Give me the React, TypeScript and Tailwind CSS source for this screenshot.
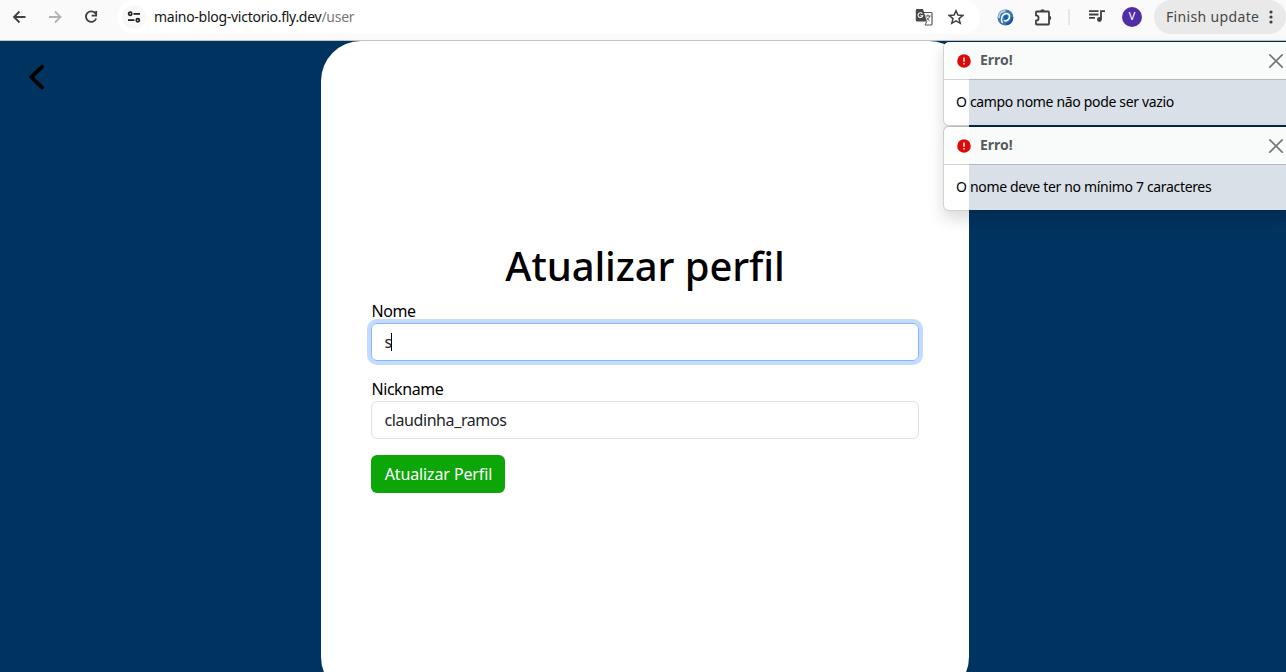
import React from "react";

const font = "font-['Noto_Sans',sans-serif]";

function Toolbar() {
  return (
    <header className="flex h-[41px] shrink-0 items-start border-b border-[#c4c4c4] bg-[#fafafa] text-[#404040]">
      <nav className="flex h-[34px] shrink-0 items-center pl-[11px]">
        <svg className="h-4 w-4" viewBox="0 0 16 16" fill="none" stroke="currentColor" strokeWidth="1.8"><path d="M14.5 8H3.5M8.5 2.5 3 8l5.5 5.5" /></svg>
        <svg className="ml-5 h-4 w-4 text-[#b3b3b3]" viewBox="0 0 16 16" fill="none" stroke="currentColor" strokeWidth="1.8"><path d="M2 8h11M8 2.5 13.5 8 8 13.5" /></svg>
        <svg className="ml-5 h-4 w-4" viewBox="0 0 16 16" fill="none" stroke="currentColor" strokeWidth="1.8"><path d="M12.7 4.7A5.3 5.3 0 1 0 13.2 9.5M13.2 2v4.6H8.6" /></svg>
      </nav>
      <div className="ml-[18px] flex h-[34px] w-[863px] shrink-0 items-center rounded-full bg-white pl-[5px]">
        <span className="flex h-6 w-6 items-center justify-center rounded-full bg-[#f8f8f8] text-[#202020]">
          <svg className="h-3.5 w-3.5" viewBox="0 0 14 14" fill="none" stroke="currentColor" strokeWidth="1.7"><circle cx="3.2" cy="3.8" r="1.6" /><path d="M6.5 3.8H13M1 10.2h6.4" /><circle cx="10.8" cy="10.2" r="1.6" /></svg>
        </span>
        <span className="ml-2 w-[761px] pb-[2px] text-[14px] tracking-[-0.27px] text-[#151515]">maino-blog-victorio.fly.dev<span className="text-[#777]">/user</span></span>
        <svg className="h-[18px] w-[18px] shrink-0" viewBox="0 0 18 18">
          <path d="M8.2 4.5H16a1 1 0 0 1 1 1V16a1 1 0 0 1-1 1h-6" fill="#fff" stroke="#555" strokeWidth="1.2" />
          <path d="M2 1h6l3.8 12.5H2A1.2 1.2 0 0 1 .8 12.3V2.2A1.2 1.2 0 0 1 2 1z" fill="#484848" />
          <path d="M7.3 5.6a2.4 2.4 0 1 0 .4 2.2H5.4" fill="none" stroke="#fff" strokeWidth="1.1" />
          <path d="M10.4 8h5.2M13 6.7V8M14.7 8c-.5 2-1.8 3.5-3.2 4.5M11.6 9.5c.7 1.4 1.8 2.5 3 3.3M10 17l1.8-3.5" fill="none" stroke="#555" strokeWidth="1" />
        </svg>
        <svg className="ml-[15px] h-4 w-4 shrink-0" viewBox="0 0 16 16" fill="none" stroke="currentColor" strokeWidth="1.5"><path d="m8 1.7 1.9 4.4 4.8.4-3.7 3.1 1.2 4.7L8 11.8l-4.2 2.5L5 9.6 1.3 6.5l4.8-.4z" /></svg>
      </div>
      <div className="ml-[17px] flex h-[34px] shrink-0 items-center">
        <svg className="h-[17px] w-[17px]" viewBox="0 0 17 17" fill="none">
          <circle cx="8.5" cy="8.5" r="8" fill="#3b78b5" />
          <path d="M2 9C1.5 5 4.5 2 8.5 2" stroke="#b9d2ea" strokeWidth="1.8" />
          <path d="M9 15c3.5 0 6.2-3 6-6.5" stroke="#16519a" strokeWidth="2" />
          <path d="M5.5 14C3 9.5 5.5 4.500 9.5 4.5c3.3 0 3.8 3.7 2 5.8-1.4 1.7-3.5 2-4.5 1" stroke="#fff" strokeWidth="1.5" />
          <ellipse cx="8.9" cy="8.3" rx="1.7" ry="2.3" transform="rotate(20 8.9 8.3)" fill="#155ba4" />
        </svg>
        <svg className="ml-5 h-[19px] w-[19px]" viewBox="0 0 19 19"><path d="M2 4.3Q2 3.5 2.8 3.5H14.2Q15 3.5 15 4.3V15.7Q15 16.5 14.2 16.5H2.8Q2 16.5 2 15.7V12.6a2.6 2.6 0 0 0 0-5.2z" fill="none" stroke="#404040" strokeWidth="1.8" /><path d="M6.3 3.5a2.2 2.2 0 0 1 4.4 0M15 7.8a2.2 2.2 0 0 1 0 4.4" fill="#404040" /></svg>
        <span className="ml-[15px] h-4 w-[2px] bg-[#e8e8e8]" />
        <svg className="ml-[18px] h-[18px] w-[18px]" viewBox="0 0 18 18" fill="none" stroke="currentColor" strokeWidth="1.8"><path d="M1 3.2h9.5M1 6.5h9.5M1 9.8h6M13 11.5V3.2h4" /><circle cx="11.4" cy="11.5" r="2.4" fill="currentColor" stroke="none" /></svg>
        <span className="ml-[16px] flex h-5 w-5 items-center justify-center rounded-full bg-[#512da8] font-['Roboto',sans-serif] text-[11px] text-white">V</span>
      </div>
      <div className="ml-3 flex h-[34px] w-[132px] shrink-0 items-center rounded-full bg-[#e9e9e9] pl-3 text-[14px] text-[#474747]">
        <span className="w-[98px] pb-[2px] tracking-[0.35px] whitespace-nowrap">Finish update</span>
        <svg className="ml-[2px] h-4 w-4 shrink-0" viewBox="0 0 16 16" fill="#404040"><circle cx="5" cy="3" r="1.6" /><circle cx="5" cy="8" r="1.6" /><circle cx="5" cy="13" r="1.6" /></svg>
      </div>
    </header>
  );
}

function Toast({ children }: { children: React.ReactNode }) {
  return (
    <article className="h-[85px] rounded-[6px] border border-black/[0.175] bg-white/85 bg-clip-padding text-[14px] text-black shadow-[0_8px_16px_rgba(0,0,0,0.15)]">
      <div className="flex h-[38px] items-center rounded-t-[5px] border-b border-black/[0.175] bg-[#fdfffc]/85 bg-clip-padding pr-2 pb-[2px] pl-3 text-[#555b60]">
        <svg className="mt-0.5 h-4 w-4" viewBox="0 0 16 16"><circle cx="8" cy="8" r="6.8" fill="#dc0b0b" /><path d="M8 4.5v4.3M8 10v1.5" stroke="#fff" strokeWidth="1.4" /></svg>
        <strong className="ml-2 font-bold">Erro!</strong>
        <svg className="mt-0.5 ml-auto h-4 w-4" viewBox="0 0 16 16" stroke="#777" strokeWidth="1.7" strokeLinecap="round"><path d="m1.8 1.8 12.4 12.4M14.2 1.8 1.8 14.2" /></svg>
      </div>
      <p className="px-3 pt-[11px] leading-[21px] tracking-[-0.33px] whitespace-nowrap">{children}</p>
    </article>
  );
}

export default function App() {
  return (
    <div className={`relative flex h-[672px] w-[1286px] flex-col overflow-hidden bg-[#003460] ${font}`}>
      <Toolbar />
      <main className="flex min-h-0 flex-1 items-start">
        <a href="#" aria-label="Voltar" className="flex w-[321px] shrink-0 pt-[23px] pl-7">
          <svg className="h-[26px] w-[18px]" viewBox="0 0 18 26" fill="none" stroke="#000" strokeWidth="3.8" strokeLinecap="round" strokeLinejoin="round"><path d="M14 2.8 3.3 13 14 23.4" /></svg>
        </a>
        <section className="h-[656px] w-[648px] shrink-0 rounded-[40px] bg-white px-[50px] pt-[201px] text-black">
          <h1 className="h-[48px] text-center text-[40px] leading-[48px] font-medium tracking-[-0.1px] whitespace-nowrap">Atualizar perfil</h1>
          <form className="mt-[9px] text-[16px] leading-6">
            <div className="h-[78px]">
              <label className="block h-6 pl-[0.5px] tracking-[-0.45px]">Nome</label>
              <div className="flex h-[38px] items-center rounded-[6px] border border-[#86b7fe] px-[12.4px] text-[#212529] shadow-[0_0_0_4px_#c2dbfe]"><span className="w-[6.6px] tracking-[-0.8px]">s</span><span className="h-[18px] w-px bg-black" /></div>
            </div>
            <div className="h-[78px]">
              <label className="block h-6 pl-[0.5px] tracking-[-0.45px]">Nickname</label>
              <div className="flex h-[38px] items-center rounded-[6px] border border-[#dee2e6] px-[12.4px] text-[#212529]"><span className="tracking-[-0.4px]">claudinha_ramos</span></div>
            </div>
            <button type="button" className="flex h-[38px] w-[134px] items-center justify-center rounded-[6px] bg-[#0ca608] pl-px tracking-[-0.12px] whitespace-nowrap text-white">Atualizar Perfil</button>
          </form>
        </section>
      </main>
      <aside className="absolute top-[41px] left-[943px] w-[350px]">
        <Toast>O campo nome não pode ser vazio</Toast>
        <Toast>O nome deve ter no mínimo 7 caracteres</Toast>
      </aside>
    </div>
  );
}
